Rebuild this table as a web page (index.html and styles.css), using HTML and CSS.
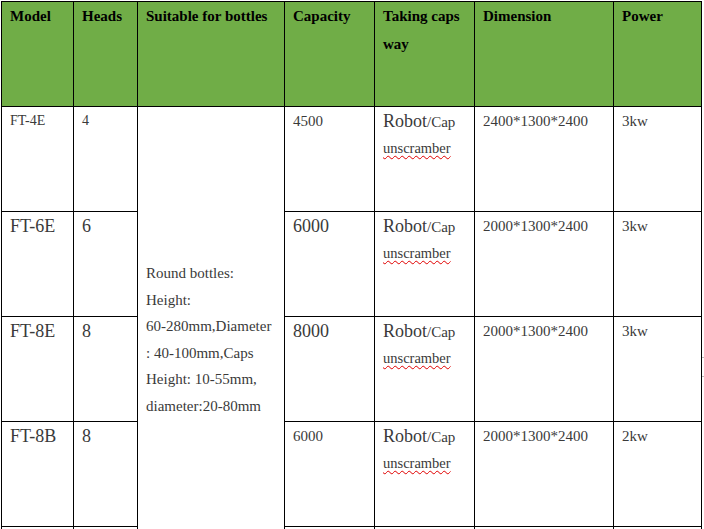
FILE: index.html
```html
<!DOCTYPE html>
<html>
<head>
<meta charset="utf-8">
<link rel="stylesheet" href="styles.css">
</head>
<body>
<table class="spec">
  <colgroup>
    <col class="c-model"><col class="c-heads"><col class="c-bottles"><col class="c-cap"><col class="c-way"><col class="c-dim"><col class="c-power">
  </colgroup>
  <tr class="head">
    <th>Model</th>
    <th>Heads</th>
    <th>Suitable for bottles</th>
    <th>Capacity</th>
    <th>Taking caps way</th>
    <th>Dimension</th>
    <th>Power</th>
  </tr>
  <tr>
    <td class="sm">FT-4E</td>
    <td class="sm">4</td>
    <td class="bottles" rowspan="5">Round bottles:<br>Height:<br>60-280mm,Diameter<br>: 40-100mm,Caps<br>Height: 10-55mm,<br>diameter:20-80mm</td>
    <td>4500</td>
    <td><span class="lg">Robot</span>/Cap<br><span class="spell">unscramber</span></td>
    <td>2400*1300*2400</td>
    <td>3kw</td>
  </tr>
  <tr>
    <td class="lg">FT-6E</td>
    <td class="lg">6</td>
    <td class="lg">6000</td>
    <td><span class="lg">Robot</span>/Cap<br><span class="spell">unscramber</span></td>
    <td>2000*1300*2400</td>
    <td>3kw</td>
  </tr>
  <tr>
    <td class="lg">FT-8E</td>
    <td class="lg">8</td>
    <td class="lg">8000</td>
    <td><span class="lg">Robot</span>/Cap<br><span class="spell">unscramber</span></td>
    <td>2000*1300*2400</td>
    <td>3kw</td>
  </tr>
  <tr>
    <td class="lg">FT-8B</td>
    <td class="lg">8</td>
    <td>6000</td>
    <td><span class="lg">Robot</span>/Cap<br><span class="spell">unscramber</span></td>
    <td>2000*1300*2400</td>
    <td>2kw</td>
  </tr>
  <tr class="tail">
    <td></td><td></td><td></td><td></td><td></td><td></td>
  </tr>
</table>
<div class="handle"></div>
</body>
</html>
```

FILE: styles.css
```css
html, body {
  margin: 0;
  padding: 0;
  overflow: hidden;
  background: #fff;
}
body {
  width: 704px;
  height: 529px;
  position: relative;
  font-family: "Liberation Serif", "Times New Roman", serif;
}
.spec {
  border-collapse: collapse;
  table-layout: fixed;
  width: 701px;
  margin: 1px 0 0 1px;
  border: 1px solid #000;
}
.c-model { width: 72px; }
.c-heads { width: 64px; }
.c-bottles { width: 147px; }
.c-cap { width: 90px; }
.c-way { width: 100px; }
.c-dim { width: 139px; }
.c-power { width: 88px; }

.spec th, .spec td {
  border: 1px solid #000;
  vertical-align: top;
  text-align: left;
  padding: 1px 6px 0 8px;
}
.spec tr { height: 105px; }
.spec tr.tail { height: 4px; }
.spec tr.tail td { padding: 0; line-height: 0; }
.head th {
  background: #70ad47;
  color: #000;
  font-weight: bold;
  font-size: 15px;
  line-height: 28px;
  padding-top: 0;
}
.spec td {
  color: #3a3a3a;
  font-size: 15px;
  line-height: 26px;
}
.spec td.sm { font-size: 14px; }
.spec td.lg, .spec .lg { font-size: 18px; }
.spec td .spell {
  font-size: 14.5px;
  text-decoration: underline wavy #e00000;
  text-decoration-thickness: 1px;
  text-underline-offset: 2px;
}
.spec td.bottles {
  font-size: 15px;
  line-height: 26.6px;
  padding-top: 153px;
}
.handle {
  position: absolute;
  left: 702px;
  top: 357px;
  width: 2px;
  height: 20px;
  border-top: 1px solid #bbb;
  border-bottom: 1px solid #bbb;
  box-sizing: border-box;
}
```
